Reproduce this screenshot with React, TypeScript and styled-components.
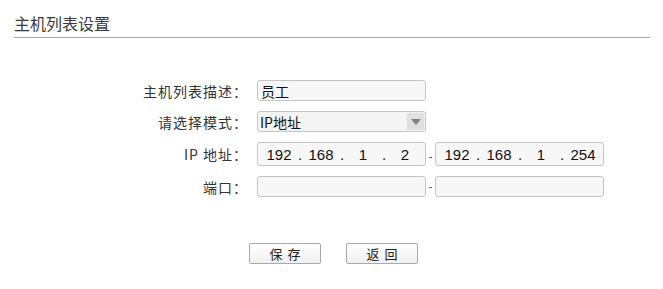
import React from "react";
import styled, { createGlobalStyle } from "styled-components";

const GlobalStyle = createGlobalStyle`
  body {
    margin: 0;
    background: #ffffff;
    font-family: "Liberation Sans", "Noto Sans CJK SC", sans-serif;
    color: #333333;
  }
`;

const Page = styled.div`
  width: 663px;
  height: 289px;
  padding: 12px 13px 0 14px;
  box-sizing: border-box;
`;

const Title = styled.h2`
  margin: 0;
  font-size: 16px;
  font-weight: normal;
  line-height: 22px;
  color: #3a3a3a;
  padding-bottom: 3px;
  border-bottom: 1px solid #a6a6a6;
  font-family: "Noto Sans CJK SC", sans-serif;
`;

const Form = styled.div`
  display: grid;
  grid-template-columns: 234px auto;
  column-gap: 9px;
  row-gap: 10px;
  margin-top: 42px;
  align-items: center;
`;

const Label = styled.div`
  text-align: right;
  font-size: 14px;
  letter-spacing: 1px;
  color: #333;
  font-family: "Noto Sans CJK SC", sans-serif;
  line-height: 20px;
`;

const Field = styled.div`
  display: flex;
  align-items: center;
`;

const TextBox = styled.div<{ $w?: number; $h?: number }>`
  width: ${(p) => p.$w ?? 169}px;
  height: ${(p) => p.$h ?? 21}px;
  box-sizing: border-box;
  border: 1px solid #c4c4c4;
  border-radius: 3px;
  background: #f7f7f7;
  display: flex;
  align-items: center;
  padding-left: 3px;
  font-size: 14px;
  color: #111;
  font-family: "Noto Sans CJK SC", sans-serif;
`;

const SelectBox = styled(TextBox)`
  position: relative;
  background: #f4f4f4;
  padding-left: 2px;
`;

const Arrow = styled.div`
  position: absolute;
  right: 1px;
  top: 1px;
  width: 17px;
  height: 17px;
  background: #e0e0e0;
  display: flex;
  align-items: center;
  justify-content: center;
  &::after {
    content: "";
    border-left: 5px solid transparent;
    border-right: 5px solid transparent;
    border-top: 6px solid #808080;
  }
`;

const IpBox = styled(TextBox)`
  padding-left: 4px;
  font-family: "Liberation Sans", sans-serif;
  font-size: 15px;
  color: #111;
`;

const Seg = styled.span`
  width: 34px;
  text-align: center;
`;

const Dot = styled.span`
  width: 8px;
  text-align: center;
`;

const Dash = styled.span<{ $low?: boolean }>`
  width: 9px;
  text-align: center;
  font-size: 12px;
  color: #555;
  font-family: "Liberation Sans", sans-serif;
  align-self: ${(p) => (p.$low ? "flex-end" : "center")};
  line-height: ${(p) => (p.$low ? "18px" : "normal")};
`;

const Buttons = styled.div`
  display: flex;
  justify-content: center;
  gap: 25px;
  margin-top: 46px;
  padding-left: 3px;
`;

const Button = styled.button`
  width: 72px;
  height: 21px;
  box-sizing: border-box;
  border: 1px solid #a9a9a9;
  border-radius: 2px;
  background: linear-gradient(#ffffff, #f1f1f1);
  font-size: 13px;
  letter-spacing: 5px;
  color: #222;
  font-family: "Noto Sans CJK SC", sans-serif;
  padding: 0 0 0 5px;
  line-height: 18px;
`;

const Ip = ({ parts }: { parts: string[] }) => (
  <IpBox $h={24}>
    {parts.map((p, i) => (
      <React.Fragment key={i}>
        {i > 0 && <Dot>.</Dot>}
        <Seg>{p}</Seg>
      </React.Fragment>
    ))}
  </IpBox>
);

export default function App() {
  return (
    <Page>
      <GlobalStyle />
      <Title>主机列表设置</Title>
      <Form>
        <Label>主机列表描述：</Label>
        <Field>
          <TextBox>员工</TextBox>
        </Field>
        <Label>请选择模式：</Label>
        <Field>
          <SelectBox>
            IP地址
            <Arrow />
          </SelectBox>
        </Field>
        <Label>IP 地址：</Label>
        <Field>
          <Ip parts={["192", "168", "1", "2"]} />
          <Dash $low>-</Dash>
          <Ip parts={["192", "168", "1", "254"]} />
        </Field>
        <Label>端口：</Label>
        <Field>
          <TextBox />
          <Dash>-</Dash>
          <TextBox />
        </Field>
      </Form>
      <Buttons>
        <Button>保存</Button>
        <Button>返回</Button>
      </Buttons>
    </Page>
  );
}
